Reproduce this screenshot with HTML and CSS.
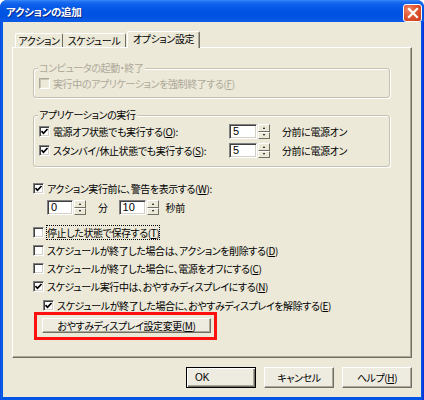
FILE: index.html
```html
<!DOCTYPE html>
<html lang="ja">
<head>
<meta charset="utf-8">
<title>アクションの追加</title>
<link rel="stylesheet" href="styles.css">
</head>
<body>
<div class="window">
  <div class="titlebar">
    <span class="title">アクションの追加</span>
    <span class="close"><svg width="12" height="12" viewBox="0 0 12 12"><path d="M2 2L10 10M10 2L2 10" stroke="#fff" stroke-width="2.2" stroke-linecap="square"/></svg></span>
  </div>
  <div class="client">
    <div class="tabs">
      <div class="tab t1">アクション</div>
      <div class="tab t2">スケジュール</div>
      <div class="tab sel">オプション設定</div>
    </div>
    <div class="panel">
      <div class="group g1">
        <span class="glabel disabled">コンピュータの起動・終了</span>
        <div class="row"><span class="cb dis"></span><span class="lbl disabled">実行中のアプリケーションを強制終了する(<u>F</u>)</span></div>
      </div>
      <div class="group g2">
        <span class="glabel">アプリケーションの実行</span>
        <div class="srow">
          <div class="row rlabel"><span class="cb"><svg width="9" height="9" viewBox="0 0 9 9"><path d="M1.5 4.2L3.5 6.3L7.5 2" fill="none" stroke="#000" stroke-width="1.7"/></svg></span><span class="lbl">電源オフ状態でも実行する(<u>O</u>):</span></div>
          <div class="spin"><span class="field w28">5</span><span class="arrows"><span class="ab"><i class="up"></i></span><span class="ab"><i class="dn"></i></span></span></div>
          <span class="unit">分前に電源オン</span>
        </div>
        <div class="srow second">
          <div class="row rlabel"><span class="cb"><svg width="9" height="9" viewBox="0 0 9 9"><path d="M1.5 4.2L3.5 6.3L7.5 2" fill="none" stroke="#000" stroke-width="1.7"/></svg></span><span class="lbl">スタンバイ/休止状態でも実行する(<u>S</u>):</span></div>
          <div class="spin"><span class="field w28">5</span><span class="arrows"><span class="ab"><i class="up"></i></span><span class="ab"><i class="dn"></i></span></span></div>
          <span class="unit">分前に電源オン</span>
        </div>
      </div>
      <div class="row warn"><span class="cb"><svg width="9" height="9" viewBox="0 0 9 9"><path d="M1.5 4.2L3.5 6.3L7.5 2" fill="none" stroke="#000" stroke-width="1.7"/></svg></span><span class="lbl">アクション実行前に、警告を表示する(<u>W</u>):</span></div>
      <div class="timerow">
        <div class="spin"><span class="field w26">0</span><span class="arrows"><span class="ab"><i class="up"></i></span><span class="ab"><i class="dn"></i></span></span></div>
        <span class="tunit min">分</span>
        <div class="spin sec"><span class="field w27">10</span><span class="arrows"><span class="ab"><i class="up"></i></span><span class="ab"><i class="dn"></i></span></span></div>
        <span class="tunit secl">秒前</span>
      </div>
      <div class="checks">
        <div class="row"><span class="cb"></span><span class="lbl focus">停止した状態で保存する(<u>T</u>)</span></div>
        <div class="row"><span class="cb"></span><span class="lbl">スケジュールが終了した場合は、アクションを削除する(<u>D</u>)</span></div>
        <div class="row"><span class="cb"></span><span class="lbl">スケジュールが終了した場合に、電源をオフにする(<u>C</u>)</span></div>
        <div class="row"><span class="cb"><svg width="9" height="9" viewBox="0 0 9 9"><path d="M1.5 4.2L3.5 6.3L7.5 2" fill="none" stroke="#000" stroke-width="1.7"/></svg></span><span class="lbl">スケジュール実行中は、おやすみディスプレイにする(<u>N</u>)</span></div>
        <div class="row indent"><span class="cb"><svg width="9" height="9" viewBox="0 0 9 9"><path d="M1.5 4.2L3.5 6.3L7.5 2" fill="none" stroke="#000" stroke-width="1.7"/></svg></span><span class="lbl">スケジュールが終了した場合に、おやすみディスプレイを解除する(<u>E</u>)</span></div>
      </div>
      <div class="highlight">
        <div class="btn wide">おやすみディスプレイ設定変更(<u>M</u>)</div>
      </div>
    </div>
    <div class="buttons">
      <div class="btn def">OK</div>
      <div class="btn">キャンセル</div>
      <div class="btn">ヘルプ(<u>H</u>)</div>
    </div>
  </div>
</div>
</body>
</html>
```

FILE: styles.css
```css
* { box-sizing: border-box; }
html, body { margin: 0; padding: 0; }
body {
  width: 424px;
  height: 400px;
  overflow: hidden;
  font-family: "Noto Sans CJK JP", "Noto Sans", sans-serif;
  font-size: 10px;
  font-feature-settings: "palt" 1;
  letter-spacing: -0.4px;
  color: #000;
  background: #fff;
}
u { text-decoration: underline; text-underline-offset: 1px; }

.window {
  width: 424px;
  height: 400px;
  display: flex;
  flex-direction: column;
  background: linear-gradient(to right, #0831d9 0, #166aee 1px, #0055e5 2px, #0055e5 422px, #0831d9 423px);
  border-radius: 7px 7px 0 0;
  overflow: hidden;
}

.titlebar {
  flex: none;
  height: 22px;
  display: flex;
  align-items: center;
  justify-content: space-between;
  padding: 0 2px 0 6px;
  background: linear-gradient(to bottom, #3a8cf8 0, #1a6cf0 2px, #0a5ee8 5px, #0054e3 11px, #0052e0 17px, #0a58e6 20px, #0a5ae8 22px);
}
.title {
  color: #fff;
  font-weight: bold;
  font-size: 10.5px;
  letter-spacing: -0.3px;
  text-shadow: 1px 1px 0 #0a2a8a;
}
.close {
  width: 19px;
  height: 18px;
  margin-top: 3px;
  display: flex;
  align-items: center;
  justify-content: center;
  border: 1px solid #fff;
  border-radius: 3px;
  background: radial-gradient(circle at 30% 30%, #f08a6a 0, #e0542f 45%, #c63b1c 100%);
}

.client {
  flex: 1;
  margin: 0 3px 3px 3px;
  background: #ece9d8;
  padding: 9px 9px 0 9px;
  display: flex;
  flex-direction: column;
}

.tabs {
  height: 17px;
  margin-bottom: -1px;
  display: flex;
  align-items: flex-end;
  padding-left: 3px;
  position: relative;
  z-index: 1;
}
.tab {
  height: 14px;
  margin-bottom: 1px;
  display: flex;
  align-items: center;
  justify-content: center;
  white-space: nowrap;
  background: #ece9d8;
  border-top: 1px solid #fff;
  border-left: 1px solid #fff;
  border-right: 1px solid #716f64;
  border-radius: 2px 2px 0 0;
  line-height: 12px;
  padding-top: 1px;
}
.t1 { width: 48px; }
.t2 { width: 63px; border-left: none; }
.tab.sel {
  width: 73px;
  height: 17px;
  margin-bottom: 0;
  margin-left: 1px;
  padding-top: 0;
  padding-bottom: 3px;
  box-shadow: inset -1px 0 0 #aca899;
}

.panel {
  height: 311px;
  border: 1px solid;
  border-color: #fff #716f64 #716f64 #fff;
  box-shadow: inset -1px -1px 0 #aca899;
  padding: 20px 21px 0 20px;
  display: flex;
  flex-direction: column;
}

.group {
  position: relative;
  border: 1px solid #c5c2b2;
  border-radius: 3px;
  box-shadow: inset 1px 1px 0 #fff, 1px 1px 0 #fff;
}
.glabel {
  position: absolute;
  top: -8px;
  left: 4px;
  padding: 0 1px;
  background: #ece9d8;
  line-height: 14px;
}
.g1 { padding: 7px 0 7px 5px; }
.g2 { margin-top: 17px; padding: 8px 0 8px 5px; }

.row {
  height: 14px;
  display: flex;
  align-items: center;
  white-space: nowrap;
}
.lbl { margin-left: 3px; line-height: 13px; }
.disabled { color: #aca899; }

.cb {
  flex: none;
  width: 11px;
  height: 11px;
  background: #fff;
  border: 1px solid;
  border-color: #808080 #fff #fff #808080;
  box-shadow: inset 1px 1px 0 #404040, inset -1px -1px 0 #d4d0c8;
  display: flex;
  align-items: center;
  justify-content: center;
}
.cb.dis {
  background: #ece9d8;
  border-color: #aca899 #fff #fff #aca899;
  box-shadow: inset 1px 1px 0 #c9c6b6, inset -1px -1px 0 #f1efe2;
}

.srow {
  height: 15px;
  display: flex;
  align-items: center;
}
.srow.second { margin-top: 4px; }
.rlabel { width: 190px; }

.spin { display: flex; gap: 1px; height: 15px; }
.field {
  height: 15px;
  background: #fff;
  border: 1px solid;
  border-color: #808080 #fff #fff #808080;
  box-shadow: inset 1px 1px 0 #404040, inset -1px -1px 0 #d4d0c8;
  padding: 0 0 0 3px;
  line-height: 13px;
  font-family: "Liberation Sans", sans-serif;
  font-size: 11px;
  letter-spacing: 0;
}
.w28 { width: 28px; }
.w26 { width: 26px; }
.w27 { width: 27px; }
.arrows {
  width: 12px;
  display: flex;
  flex-direction: column;
}
.ab {
  flex: 1;
  display: flex;
  align-items: center;
  justify-content: center;
  background: #ece9d8;
  border: 1px solid;
  border-color: #fff #716f64 #716f64 #fff;
}
.ab i { display: block; width: 0; height: 0; border-left: 1.5px solid transparent; border-right: 1.5px solid transparent; }
.ab i.up { border-bottom: 2px solid #000; }
.ab i.dn { border-top: 2px solid #000; }
.unit { margin-left: 12px; }

.warn { margin-top: 14px; }
.timerow {
  margin-top: 5px;
  height: 15px;
  display: flex;
  align-items: center;
  padding-left: 14px;
}
.tunit { line-height: 13px; }
.min { margin-left: 12px; }
.sec { margin-left: 11px; }
.secl { margin-left: 7px; }

.checks {
  margin-top: 10px;
  display: flex;
  flex-direction: column;
  gap: 4.25px;
}
.indent { padding-left: 10px; }
.focus { outline: 1px dotted #000; outline-offset: 0; }

.highlight {
  margin-top: 0;
  margin-left: 1px;
  width: 183px;
  height: 28px;
  border: 3px solid #ff1010;
  padding: 3px 0 0 5px;
}

.btn {
  height: 21px;
  width: 70px;
  display: flex;
  align-items: center;
  justify-content: center;
  background: #eeebe0;
  border: 1px solid;
  border-color: #fff #716f64 #716f64 #fff;
  box-shadow: inset -1px -1px 0 #aca899;
  white-space: nowrap;
}
.btn.wide { width: 169px; height: 15px; line-height: 13px; }
.btn.def {
  border-color: #000;
  box-shadow: inset 1px 1px 0 #fff, inset -1px -1px 0 #716f64, inset -2px -2px 0 #aca899;
  font-family: "Liberation Sans", sans-serif;
  letter-spacing: 0;
  justify-content: flex-start;
  padding-left: 8px;
}

.buttons {
  margin-top: 9px;
  display: flex;
  justify-content: flex-end;
  gap: 8px;
}
```
